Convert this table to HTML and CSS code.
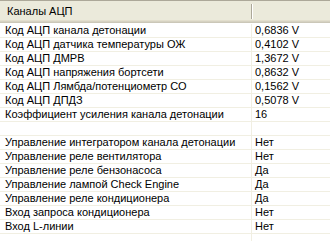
FILE: index.html
```html
<!DOCTYPE html>
<html>
<head>
<meta charset="utf-8">
<link rel="stylesheet" href="styles.css">
</head>
<body>
<div class="list">
  <div class="header">
    <div class="hcell first">Каналы АЦП</div>
    <div class="hcell"></div>
  </div>
  <div class="rows">
    <div class="row"><div class="name">Код АЦП канала детонации</div><div class="val">0,6836 V</div></div>
    <div class="row"><div class="name">Код АЦП датчика температуры ОЖ</div><div class="val">0,4102 V</div></div>
    <div class="row"><div class="name">Код АЦП ДМРВ</div><div class="val">1,3672 V</div></div>
    <div class="row"><div class="name">Код АЦП напряжения бортсети</div><div class="val">0,8632 V</div></div>
    <div class="row"><div class="name">Код АЦП Лямбда/потенциометр СО</div><div class="val">0,1562 V</div></div>
    <div class="row"><div class="name">Код АЦП ДПДЗ</div><div class="val">0,5078 V</div></div>
    <div class="row"><div class="name">Коэффициент усиления канала детонации</div><div class="val">16</div></div>
    <div class="row"><div class="name"></div><div class="val"></div></div>
    <div class="row"><div class="name">Управление интегратором канала детонации</div><div class="val">Нет</div></div>
    <div class="row"><div class="name">Управление реле вентилятора</div><div class="val">Нет</div></div>
    <div class="row"><div class="name">Управление реле бензонасоса</div><div class="val">Да</div></div>
    <div class="row"><div class="name">Управление лампой Check Engine</div><div class="val">Да</div></div>
    <div class="row"><div class="name">Управление реле кондиционера</div><div class="val">Да</div></div>
    <div class="row"><div class="name">Вход запроса кондиционера</div><div class="val">Нет</div></div>
    <div class="row"><div class="name">Вход L-линии</div><div class="val">Нет</div></div>
    <div class="row filler"><div class="name"></div><div class="val"></div></div>
  </div>
</div>
</body>
</html>
```
FILE: styles.css
```css
html, body {
  margin: 0;
  padding: 0;
  background: #ffffff;
  width: 330px;
  height: 241px;
  overflow: hidden;
}
.list {
  font-family: "Liberation Sans", Arial, sans-serif;
  font-size: 11px;
  color: #000000;
}
.header {
  display: grid;
  grid-template-columns: 252px 1fr;
  height: 23px;
  box-sizing: border-box;
  border-top: 1px solid #aca899;
  background: #ebeadb;
  box-shadow: inset 0 -1px 0 #cbc7b8, inset 0 -2px 0 #d6d2c2, inset 0 -3px 0 #e2decd;
}
.hcell {
  display: flex;
  align-items: center;
  padding-left: 7px;
  padding-bottom: 2px;
  white-space: nowrap;
}
.hcell.first {
  position: relative;
}
.hcell.first::after {
  content: "";
  position: absolute;
  right: 0;
  top: 3px;
  bottom: 4px;
  width: 1px;
  background: #aca899;
  box-shadow: 1px 0 0 #ffffff;
}
.rows {
  padding-top: 1px;
}
.row {
  display: grid;
  grid-template-columns: 252px 1fr;
  height: 14px;
  box-sizing: border-box;
  border-bottom: 1px solid #f1efe2;
  line-height: 13px;
  white-space: nowrap;
}
.row.filler {
  border-bottom: none;
}
.name {
  padding-left: 5px;
  border-right: 1px solid #f1efe2;
  overflow: hidden;
}
.val {
  padding-left: 3px;
  overflow: hidden;
}
```
